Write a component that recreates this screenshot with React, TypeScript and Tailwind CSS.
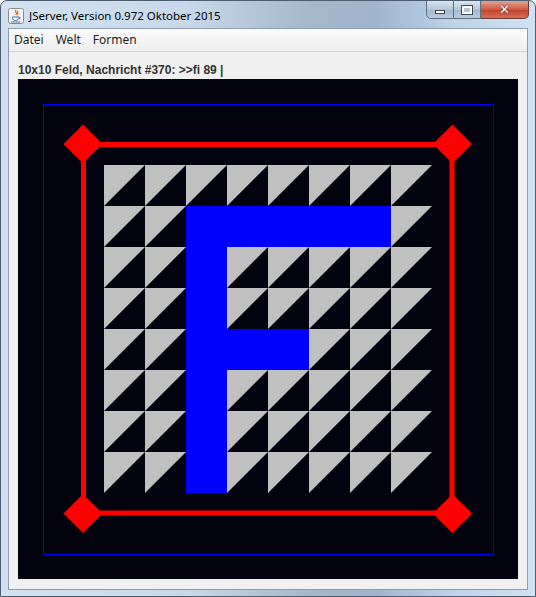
import React from 'react'

const CELL = 41
const ORIGIN = 45

// F shape cells (col,row) inside the 10x10 field
const isBlue = (c: number, r: number) =>
    (c === 3 && r >= 2 && r <= 8) ||
    (r === 2 && c >= 3 && c <= 7) ||
    (r === 5 && c >= 3 && c <= 5)

const diamond = (cx: number, cy: number, h: number) =>
    `${cx},${cy - h} ${cx + h},${cy} ${cx},${cy + h} ${cx - h},${cy}`

const Field: React.FC = () => {
    const cells: React.ReactNode[] = []
    for (let r = 1; r <= 8; r++) {
        for (let c = 1; c <= 8; c++) {
            const x = ORIGIN + CELL * c
            const y = ORIGIN + CELL * r
            if (isBlue(c, r)) continue
            cells.push(
                <polygon key={`${c}-${r}`} points={`${x},${y} ${x + CELL},${y} ${x},${y + CELL}`} fill="#c0c0c0" />
            )
        }
    }
    return (
        <svg width="500" height="500" viewBox="0 0 500 500" className="block">
            <rect x="0" y="0" width="500" height="500" fill="#03030f" />
            <rect x="25.5" y="25.5" width="450" height="450" fill="none" stroke="#0000ff" strokeWidth="1" />
            {cells}
            <rect x="168" y="127" width="41" height="287" fill="#0000ff" />
            <rect x="168" y="127" width="205" height="41" fill="#0000ff" />
            <rect x="168" y="250" width="123" height="41" fill="#0000ff" />
            <rect x="65.5" y="65.5" width="368.5" height="368.5" fill="none" stroke="#ff0000" strokeWidth="5" />
            <polygon points={diamond(65, 65, 19.5)} fill="#ff0000" />
            <polygon points={diamond(434.5, 65, 19.5)} fill="#ff0000" />
            <polygon points={diamond(65, 434.5, 19.5)} fill="#ff0000" />
            <polygon points={diamond(434.5, 434.5, 19.5)} fill="#ff0000" />
        </svg>
    )
}

const JavaIcon: React.FC = () => (
    <svg width="16" height="16" viewBox="0 0 16 16">
        <rect x="0.5" y="0.5" width="15" height="15" rx="2" fill="#f4f4f4" stroke="#8a8a8a" />
        <path d="M8 2c-2 2 2 2.5 0 5M10 3c-1.5 1.5 1 2-0.5 3.5" stroke="#e05a1c" strokeWidth="1.2" fill="none" />
        <path d="M4 9h7c1.5 0 1.5 2 0 2M4.5 9.5c0 2 1 3 3 3s3-1 3-3" stroke="#4f6fa8" strokeWidth="1" fill="none" />
        <path d="M3 14h9" stroke="#4f6fa8" strokeWidth="1" />
    </svg>
)

const App: React.FC = () => {
    return (
        <div className="w-[536px] h-[597px] flex flex-col rounded-t-[7px] border border-[#4d5d70] bg-[linear-gradient(90deg,#d3e2f1_0%,#c6d8ea_35%,#a3b8cd_58%,#9fb5cb_70%,#bcd3ea_85%,#d0e2f4_100%)] overflow-hidden" style={{ fontFamily: '"Noto Sans", sans-serif' }}>
            <div className="h-[27px] flex items-start shrink-0">
                <div className="pl-[7px] pt-[7px] flex items-center gap-[5px]">
                    <JavaIcon />
                    <span className="text-[11.5px] text-black leading-[16px]">JServer, Version 0.972 Oktober 2015</span>
                </div>
                <div className="ml-auto mr-[6px] flex h-[19px] -mt-px">
                    <div className="w-[28px] flex items-center justify-center border border-[#5d6f83] rounded-bl-[5px] bg-[linear-gradient(180deg,#d9e5f1,#b4c6d8_50%,#a2b6ca_51%,#b9ccdf)]">
                        <div className="w-[10px] h-[4px] mt-[5px] bg-white border border-[#3d4a5a]" />
                    </div>
                    <div className="w-[27px] flex items-center justify-center border-y border-r border-[#5d6f83] bg-[linear-gradient(180deg,#d9e5f1,#b4c6d8_50%,#a2b6ca_51%,#b9ccdf)]">
                        <div className="w-[10px] h-[8px] border-2 border-white outline outline-1 outline-[#3d4a5a] bg-[#b4c6d8]" />
                    </div>
                    <div className="w-[48px] flex items-center justify-center border-y border-r border-[#6e3a30] rounded-br-[5px] bg-[linear-gradient(180deg,#e3a393,#cf5a44_50%,#c23f28_51%,#d6715a)] text-white text-[13px] font-bold leading-none" style={{ fontFamily: '"DejaVu Sans", sans-serif' }}>
                        <span className="drop-shadow-[0_0_1px_#333]">✕</span>
                    </div>
                </div>
            </div>
            <div className="mx-[7px] mb-[6px] flex-1 flex flex-col bg-[#f0f0f0] border border-[#8a9db2]">
                <div className="h-[23px] shrink-0 flex items-center gap-[12px] px-[5px] bg-[linear-gradient(180deg,#fcfcfc,#ededed)] border-b border-[#d5d5d5] text-[12px] text-[#1e1e1e]">
                    <span>Datei</span>
                    <span>Welt</span>
                    <span>Formen</span>
                </div>
                <div className="pl-[9px] pt-[10px] h-[27px] text-[12px] font-bold text-[#333] leading-[16px]" style={{ fontFamily: '"Liberation Sans", Arial, sans-serif' }}>
                    10x10 Feld, Nachricht #370: &gt;&gt;fi 89 |
                </div>
                <div className="pl-[9px]">
                    <Field />
                </div>
            </div>
        </div>
    )
}

export default App
